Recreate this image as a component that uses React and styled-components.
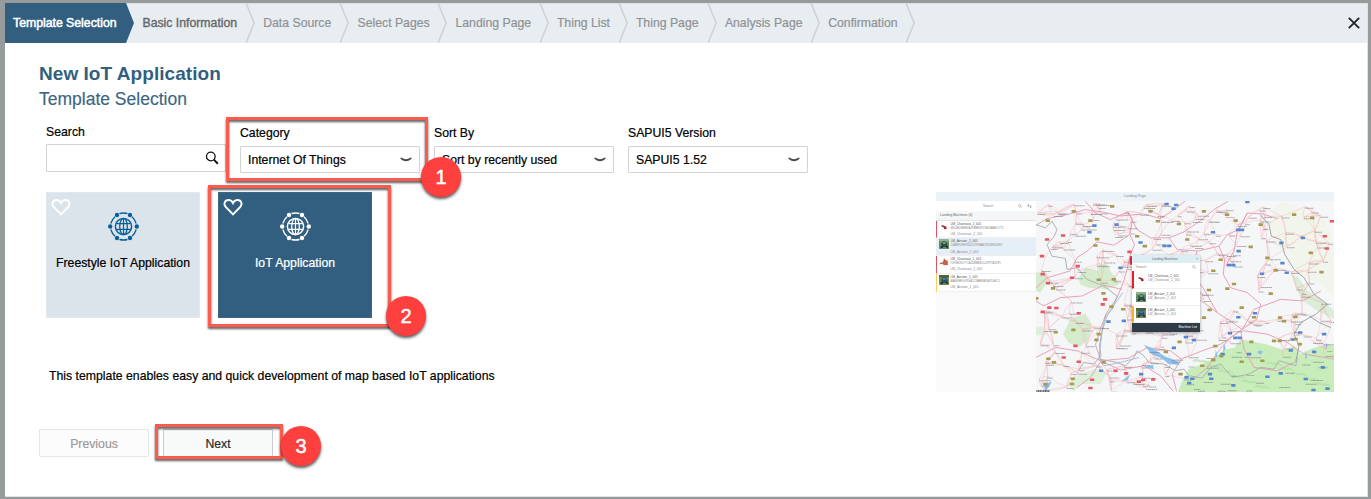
import React from "react";
import styled, { createGlobalStyle } from "styled-components";

const GlobalStyle = createGlobalStyle`
  * { box-sizing: border-box; }
  body { margin: 0; background: #979b9c; }
  body, button, input { font-family: "Liberation Sans", Arial, Helvetica, sans-serif; }
`;

const Frame = styled.div`
  height: 499px;
  padding: 3px 3px 2px 5px;
  background: #979b9c;
  font-size: 12.25px;
  color: #000;
`;

const Dialog = styled.div`
  position: relative;
  height: 494px;
  display: flex;
  flex-direction: column;
  background: #fff;
  border-right: 1px solid #dfe3e6;
  border-bottom: 1px solid #dfe3e6;
`;

const StepBar = styled.nav`
  height: 40px;
  flex: none;
  display: flex;
  background: #e8edf1;
  border-top: 1px solid #dde2e6;
`;

const Step = styled.div`
  position: relative;
  width: ${(p) => p.$width}px;
  height: 40px;
  margin-top: -1px;
  padding-left: ${(p) => ({ active: 8, next: 16.5, idle: 17.2 })[p.$state]}px;
  line-height: 41px;
  white-space: nowrap;
  background: ${(p) => (p.$state === "active" ? "#325f7f" : "transparent")};
  color: ${(p) => ({ active: "#fff", next: "#646769", idle: "#8f9294" })[p.$state]};
  -webkit-text-stroke: ${(p) => ({ active: "0.5px #fff", next: "0.35px #646769", idle: "0.2px #8f9294" })[p.$state]};
`;

const Chevron = styled.svg`
  position: absolute;
  left: 100%;
  top: 0;
  width: 9px;
  height: 40px;
`;

const CloseButton = styled.button`
  width: 14px;
  height: 40px;
  margin: -1px 6px 0 auto;
  padding: 0;
  border: 0;
  background: none;
  display: grid;
  place-items: center;
`;

const Content = styled.main`
  flex: 1;
  padding: 20px 33px 0 34px;
`;

const Title = styled.h1`
  margin: 0;
  font-size: 19px;
  line-height: 22px;
  letter-spacing: 0.05px;
  color: #325f7f;
`;

const Subtitle = styled.h2`
  margin: 0;
  padding-top: 2px;
  font-size: 17.5px;
  line-height: 24px;
  font-weight: 400;
  color: #3b6583;
  -webkit-text-stroke: 0.15px #3b6583;
`;

const Filters = styled.div`
  display: flex;
  gap: 14px;
  padding: 12px 0 0 7px;
`;

const Field = styled.label`
  width: 180px;
  display: flex;
  flex-direction: column;
  gap: ${(p) => (p.$search ? 3 : 4)}px;
  padding-top: ${(p) => (p.$search ? 0 : 1)}px;
  line-height: 18px;
  -webkit-text-stroke: 0.2px #000;
`;

const Control = styled.div`
  height: ${(p) => p.$height || 28}px;
  display: flex;
  align-items: center;
  justify-content: space-between;
  padding: 0 ${(p) => (p.$search ? 6 : 7)}px 0 7px;
  border: 1px solid #d3d3d3;
  border-radius: 1px;
  background: #fff;
`;

const SearchInput = styled.input`
  width: 140px;
  border: 0;
  padding: 0;
  outline: 0;
  background: none;
`;

const Body = styled.div`
  display: flex;
  justify-content: space-between;
  height: 200px;
  margin-top: 19px;
`;

const Tiles = styled.div`
  display: flex;
  gap: 18px;
  padding-left: 7px;
`;

const Tile = styled.div`
  position: relative;
  width: 154px;
  height: 126px;
  display: flex;
  flex-direction: column;
  align-items: center;
  padding-top: 19px;
  gap: 12.5px;
  background: ${(p) => (p.$selected ? "#325f7f" : "#dce4eb")};
  border: 1px solid ${(p) => (p.$selected ? "#3b6685" : "#e1e8ee")};
  color: ${(p) => (p.$selected ? "#fff" : "#000")};
  -webkit-text-stroke: 0.22px currentColor;
  line-height: 18px;
`;

const Heart = styled.svg`
  position: absolute;
  left: 4px;
  top: 5px;
`;

const LeftColumn = styled.div`
  display: flex;
  flex-direction: column;
`;

const Description = styled.p`
  margin: 0;
  padding: 48.5px 0 0 10px;
  line-height: 18px;
  letter-spacing: 0.006px;
  -webkit-text-stroke: 0.2px #000;
`;

const Actions = styled.div`
  display: flex;
  gap: 14px;
  margin-top: 37px;
`;

const ActionButton = styled.button`
  width: 110px;
  height: 28px;
  padding: 1px 0 0;
  font-size: 12.25px;
  border: 1px solid ${(p) => (p.disabled ? "#e6e6e6" : "#c9cbcc")};
  border-radius: 1px;
  background: ${(p) => (p.disabled ? "#fcfcfc" : "#f8fafa")};
  color: ${(p) => (p.disabled ? "#9a9a9a" : "#2b2b2b")};
  -webkit-text-stroke: 0.2px currentColor;
`;

/* Numbered callouts that lie over the dialog */
const CalloutBox = styled.div`
  position: absolute;
  left: ${(p) => p.$x}px;
  top: ${(p) => p.$y}px;
  width: ${(p) => p.$w}px;
  height: ${(p) => p.$h}px;
  border: 3px solid #fd5b4d;
  filter: drop-shadow(0 2px 1px rgba(0, 0, 0, 0.65));
  pointer-events: none;
`;

const CalloutNumber = styled.div`
  position: absolute;
  left: ${(p) => p.$x}px;
  top: ${(p) => p.$y}px;
  width: 40px;
  height: 40px;
  border-radius: 50%;
  background: #fd403e;
  color: #fff;
  font-size: 20px;
  line-height: 41px;
  text-align: center;
  -webkit-text-stroke: 0.5px #fff;
  box-shadow: 0 2px 3px rgba(0, 0, 0, 0.65);
`;

/* Template preview */
const Preview = styled.div`
  width: 398px;
  height: 200px;
  display: flex;
  flex-direction: column;
  overflow: hidden;
  background: #fafafa;
  color: #666;
  font-size: 3.3px;
  line-height: 4px;
`;

const PreviewHeader = styled.div`
  height: 9px;
  flex: none;
  background: #ebf2f8;
  text-align: center;
  line-height: 9px;
  font-size: 3.6px;
  color: #888;
`;

const PreviewBody = styled.div`
  flex: 1;
  display: flex;
  min-height: 0;
`;

const ListPanel = styled.div`
  width: 99.5px;
`;

const PreviewSearch = styled.div`
  display: flex;
  align-items: center;
  height: ${(p) => p.$h}px;
  padding: 0 4px 0 ${(p) => p.$indent}px;
  gap: 5px;
  background: #fff;
  color: #888;
  span { flex: 1; }
`;

const GroupHeader = styled.div`
  height: 9.5px;
  padding-left: 4px;
  line-height: 9px;
  font-size: 3.4px;
  background: #f5f6f7;
  border-bottom: 0.5px solid #e3e3e3;
`;

const Machine = styled.div`
  height: ${(p) => p.$h}px;
  display: flex;
  gap: ${(p) => (p.$popup ? 2 : 1.5)}px;
  padding: ${(p) => (p.$popup ? "2.6px 0 0 2px" : "1px 0 0 2px")};
  border-left: ${(p) => (p.$popup ? 2 : 1.6)}px solid ${(p) => p.$bar};
  background: ${(p) => (p.$selected ? "#e6eff8" : "#fff")};
  border-bottom: 0.5px solid #efefef;
`;

const MachineText = styled.div`
  display: flex;
  flex-direction: column;
  gap: ${(p) => (p.$popup ? 0.4 : 1.1)}px;
  white-space: nowrap;
  color: #8a8a8a;
  b { font-weight: 400; font-size: 3.2px; color: #555; }
`;

const MachineId = styled.span`
  font-size: 2.7px;
`;

const MapArea = styled.div`
  position: relative;
  flex: 1;
  overflow: hidden;
`;

const Popup = styled.div`
  position: absolute;
  left: 96.5px;
  top: 54px;
  width: 68px;
  height: 77px;
  background: #fff;
  box-shadow: 0 1px 3px rgba(0, 0, 0, 0.35);
`;

const PopupHeader = styled.div`
  height: 8px;
  line-height: 8px;
  padding: 0 2px 0 20px;
  display: flex;
  justify-content: space-between;
  background: #dcedf4;
  font-size: 3.2px;
`;

const PopupFooter = styled.div`
  height: 9.5px;
  padding-right: 3px;
  line-height: 9.5px;
  text-align: right;
  background: #2f3c48;
  color: #fff;
`;

const steps = [
  ["Template Selection", 121, "active"],
  ["Basic Information", 120, "next"],
  ["Data Source", 94.3, "idle"],
  ["Select Pages", 98, "idle"],
  ["Landing Page", 101.4, "idle"],
  ["Thing List", 79, "idle"],
  ["Thing Page", 89, "idle"],
  ["Analysis Page", 103.3, "idle"],
  ["Confirmation", 95.3, "idle"],
];

function SearchIcon({ size = 14, color = "#111" }) {
  return (
    <svg width={size} height={size} viewBox="0 0 14 14" fill="none" stroke={color}>
      <circle cx="5.8" cy="5.5" r="4.3" strokeWidth="1.3" />
      <path d="M8.9 8.6 12.8 12.7" strokeWidth="2" />
    </svg>
  );
}

function DownArrow() {
  return (
    <svg width="12" height="6" viewBox="0 0 12 6" fill="#4a4a4a">
      <path d="M.4 1.3C.4.5 1.1.4 1.7.8 4.5 2.7 7.5 2.7 10.3.8 10.9.4 11.6.5 11.6 1.3 11.6 1.7 11.4 2 11 2.3 8 4.9 4 4.9 1 2.3.6 2 .4 1.7.4 1.3Z" />
    </svg>
  );
}

function GlobeNetwork({ color }) {
  const nodes = [[2.2, 14.5], [9, 3], [22, 3], [28.8, 14.5], [22, 26], [9, 26]];
  return (
    <svg width="31" height="29" viewBox="0 0 31 29" fill="none" stroke={color} strokeWidth="1.3">
      <path d="M11.5 1.5Q15.5.5 19.5 1.5M11.5 27.5Q15.5 28.5 19.5 27.5M2.8 11.5Q4 7.5 7 4.8M28.2 11.5Q27 7.5 24 4.8M2.8 17.5Q4 21.5 7 24.2M28.2 17.5Q27 21.5 24 24.2" />
      <circle cx="15.5" cy="14.5" r="8.1" strokeWidth="1.5" />
      <ellipse cx="15.5" cy="14.5" rx="3.8" ry="8.1" />
      <path d="M15.5 6.5V22.5M8.4 11.7H22.6M8.4 17.3H22.6" strokeWidth="1.2" />
      {nodes.map(([x, y]) => (
        <circle key={`${x}-${y}`} cx={x} cy={y} r="2.2" fill={color} stroke="none" />
      ))}
    </svg>
  );
}

function TemplateTile({ label, selected }) {
  return (
    <Tile $selected={selected}>
      <Heart width="20" height="19" viewBox="0 0 20 19" fill="none" stroke="#fff" strokeWidth="1.9">
        <path d="M10 16.3 2.8 9C.2 6 1.8 2 5.4 2 7.6 2 9.2 3.2 10 5 10.8 3.2 12.4 2 14.6 2 18.2 2 19.8 6 17.2 9Z" />
      </Heart>
      <GlobeNetwork color={selected ? "#fff" : "#0b5f97"} />
      <span>{label}</span>
    </Tile>
  );
}

const ThumbSvg = styled.svg`
  flex: none;
  width: 10px;
  height: 10px;
`;

function Thumb({ kind, framed }) {
  const red = kind === "saw" || kind === "saw2";
  return (
    <ThumbSvg viewBox="0 0 30 30">
      <rect width="30" height="30" fill={red ? "#fff" : kind === "blue" ? "#6d8947" : "#638e65"} stroke={framed && red ? "#ccc" : "none"} />
      {kind === "saw" && <path d="M8 9 15 11 22 14 23 21 16 22 14 16 8 14Z" fill="#a52332" />}
      {kind === "saw2" && <path d="M2 19 12 15 15 4 20 9 26 11 27 24 14 25 11 20 2 22Z" fill="#c86050" />}
      {!red && (
        <g>
          <path d="M0 0H30V6L20 9 0 7Z" fill={kind === "blue" ? "#49653a" : "#8fb486"} />
          <path d="M7 14 12 7H20L25 14V24H7Z" fill={kind === "blue" ? "#294e78" : "#2d4d48"} />
          <path d="M12 9H20V15H12Z" fill={kind === "blue" ? "#3e81bd" : "#6e9ba1"} />
          <path d="M5 22H12V27H5ZM21 21H27V26H21Z" fill="#23332f" />
        </g>
      )}
    </ThumbSvg>
  );
}

const machines = [
  ["LM_Chainsaw_2_001", "8E14BD8B8B0A4FBBBDF07B42AABD1775", "#de5560", "saw"],
  ["LM_Aerator_2_001", "11AB3F498F6D412392BAAC9D38FD50F8", "#e6eff8", "green"],
  ["LM_Chainsaw_1_001", "74F6BD9D7TCA4DBBB3DC42F97A2DFC", "#de5560", "saw2"],
  ["LM_Aerator_1_001", "AAA4FBF049D4A11TABB3A36A7DA3C1", "#f5cc64", "blue"],
];

const popupMachines = [
  ["LM_Chainsaw_2_001", "#ec1c2c", "saw", 18],
  ["LM_Aerator_2_001", "#fff", "green", 16.5],
  ["LM_Aerator_1_001", "#f5ad3a", "blue", 17],
];

function randomFrom(seed) {
  let s = seed;
  return () => {
    s = (s * 16807) % 2147483647;
    return s / 2147483647;
  };
}

const rand = randomFrom(4127);
const towns = Array.from({ length: 300 }, () => [320 + rand() * 888, 42 + rand() * 568]);
const minorRoads = towns.flatMap(([x, y], i) =>
  towns
    .map(([a, b], j) => ({ a, b, j, d: Math.hypot(a - x, b - y) }))
    .filter((t) => t.j !== i)
    .sort((p, q) => p.d - q.d)
    .slice(0, 4)
    .filter((t) => (t.j > i || t.d > 40) && !(y > 490 && x > 760))
    .map((t) => {
      const cx = (x + t.a) / 2 + (rand() - 0.5) * 16;
      const cy = (y + t.b) / 2 + (rand() - 0.5) * 16;
      return `M${x.toFixed(0)} ${y.toFixed(0)}Q${cx.toFixed(0)} ${cy.toFixed(0)} ${t.a.toFixed(0)} ${t.b.toFixed(0)}`;
    })
);
const placeMarks = towns.map(([x, y]) => [x, y, 12 + rand() * 24]);

const mainRoads = [
  "M465 40 495 75 540 95 592 72 606 95 598 140 612 170 598 205 590 245 578 285 560 330 527 378 510 425 495 472 512 520",
  "M317 112 350 92 410 80 465 65 515 72 570 84 640 78 690 92 735 62 765 38",
  "M592 72 620 125 660 150 715 150 760 132 810 98 850 65 892 40",
  "M598 140 550 172 500 162 470 190 442 208 418 250 350 270 317 300",
  "M715 150 740 185 800 190 865 175 890 140 925 125 950 75 995 78 1040 92",
  "M865 175 882 215 878 260 900 300 950 315 990 350 978 395 935 425 900 450 868 485 830 540 790 575",
  "M590 245 655 250 705 286 760 320 810 338 860 375 905 405 940 430 1010 440 1070 465 1120 500 1211 515",
  "M575 305 520 292 455 325 390 330 340 355 317 340",
  "M317 510 375 480 440 490 512 520 595 512 650 480 720 490 752 515 810 492 870 470 930 430",
  "M512 520 480 570 440 600M512 520 570 548 640 535 690 565 728 612M752 515 725 560 738 612",
  "M950 75 920 130 910 190 885 235M800 190 780 250 820 305 860 375",
  "M935 425 970 365 1050 335 1115 340 1170 310M930 430 940 485 970 540 1040 550 1100 520",
];

const blueShields = [[737,51],[708,48],[729,62],[950,42],[558,110],[477,133],[492,113],[570,240],[630,164],[702,174],[716,174],[847,133],[922,126],[934,126],[895,232],[908,232],[924,190],[1052,165],[1116,150],[1055,226],[994,258],[1068,255],[973,377],[923,389],[898,437],[914,451],[927,451],[766,449],[534,402],[580,400],[1086,456],[1108,435],[1180,440],[955,500],[1150,493],[1080,489],[768,570],[785,574],[838,560],[842,574],[1010,568],[1050,558],[1125,575],[1148,608],[1190,604],[908,594],[1176,540],[776,587],[632,560],[730,481],[790,458],[876,500],[512,550]];
const oliveShields = [[352,98],[430,70],[480,98],[500,154],[495,173],[545,55],[660,70],[682,100],[745,108],[770,155],[820,70],[889,80],[915,98],[990,110],[1090,80],[1144,90],[960,177],[870,216],[1010,210],[1140,195],[1035,248],[1172,253],[835,307],[890,303],[910,289],[848,249],[1020,318],[505,276],[550,275],[368,302],[519,317],[318,332],[543,357],[578,365],[620,145],[643,175],[429,427],[376,434],[505,440],[498,457],[820,390],[837,367],[933,360],[970,389],[1048,390],[1060,401],[1094,388],[1094,455],[1107,470],[962,463],[1030,460],[1047,460],[854,476],[848,518],[872,506],[933,523],[995,520],[815,535],[750,560],[706,493],[747,463],[354,514],[371,525],[427,574],[425,590],[345,590],[520,525]];
const redShields = [[350,155],[398,143],[335,205],[442,235],[337,259],[425,270],[353,286],[337,373],[357,360],[378,361],[445,377],[524,335],[517,350],[435,475],[400,510],[445,523],[485,577],[480,602],[555,550],[587,558],[625,583],[638,578],[668,576],[1182,145],[1188,182],[1203,100],[597,192],[603,218]];

const MapSvg = styled.svg`
  display: block;
  width: 298.5px;
  height: 191px;
  filter: blur(0.3px);
`;

function MapDrawing() {
  return (
    <MapSvg viewBox="317 39 894 575" preserveAspectRatio="none">
      <rect x="317" y="39" width="894" height="575" fill="#f5f6f8" />
      <g fill="#c8e8bf">
        <path d="M317 255 345 250 355 275 330 315 317 310ZM444 270 465 240 510 250 552 262 565 290 530 305 475 300 450 290ZM420 395 465 378 484 410 475 455 445 480 415 465 398 440ZM500 235 530 228 545 260 515 265Z" opacity=".75" />
        <path d="M317 420 335 415 345 440 317 445ZM450 560 495 545 530 555 510 590 455 590 430 612 410 590Z" opacity=".5" />
        <path d="M1082 260 1105 272 1130 310 1165 330 1190 350 1211 370V395L1160 370 1110 335Z" opacity=".6" />
        <path d="M742 614 755 580 775 545 815 530 850 512 878 488 912 480 930 455 965 462 1005 470 1060 488 1090 475 1110 500 1145 482 1190 470 1211 475V614Z" fill="#c8edbb" />
        <path d="M1030 60 1060 42 1120 70 1180 92 1200 140 1211 180V330L1170 290 1105 260 1070 205 1035 170 1015 120Z" fill="#f0f5e4" opacity=".65" />
      </g>
      <g stroke="#addfa4" strokeWidth="2" fill="none" opacity=".8">
        {Array.from({ length: 42 }, (_, i) => {
          const x = 785 + (i * 73) % 400;
          const y = 520 + (i * 31) % 85;
          return <path key={i} d={`M${x} ${y}l12 -5 8 7 13 -4 9 6`} />;
        })}
      </g>
      <path d={minorRoads.join("")} fill="none" stroke="#f2b6b8" strokeWidth="1.5" opacity=".85" />
      <g fill="none" stroke="#ea9ab3" strokeWidth="2.8" strokeLinejoin="round">
        {mainRoads.map((d) => <path key={d} d={d} />)}
      </g>
      <g fill="none" stroke="#a9adb0" strokeWidth="2.8" strokeLinejoin="round">
        <path d="M317 110 345 120 365 100 380 125 370 148 350 170 365 205 405 212 410 245 440 240 470 275 520 295 560 325 545 365 525 385 515 430 507 475 512 505 490 530 460 525 445 550" />
        <path d="M507 515 560 525 585 535 610 510 620 490 640 505 655 525 700 530 735 550 760 545 775 565 815 572 840 540 870 530 905 570 955 560 990 540 1030 545 1045 520 1095 535 1100 510" />
        <path d="M990 82 1015 110 1022 145 1050 155 1062 200 1090 245 1120 270 1150 320 1190 350 1155 380 1110 405 1090 440 1105 475 1095 520M1135 385 1165 405 1200 420" stroke="#9a9fa0" />
      </g>
      <path d="M577 315 552 350 530 385 515 430 510 475 505 515 520 535 570 525 625 510" fill="none" stroke="#97b7da" strokeWidth="2.6" />
      <g fill="#8abff0">
        <path d="M640 472 665 482 705 508 742 522 748 533 715 530 690 510 665 502ZM640 538 667 533 670 546 655 542Z" />
        <path d="M855 485 861 508 854 512ZM880 465 885 485 877 493ZM985 488 997 492 990 502 980 495ZM1123 487 1129 510 1124 516ZM1187 465 1191 476 1184 485ZM340 590 365 583 345 614ZM572 583 600 560 592 577Z" />
      </g>
      <g stroke="#77787c" strokeWidth="3" opacity=".62">
        {placeMarks.map(([x, y, w], i) => (
          <path key={i} d={`M${x.toFixed(1)} ${(y + 5).toFixed(1)}h${w.toFixed(1)}`} strokeDasharray="4 1 6 1" />
        ))}
      </g>
      {[[blueShields, "#5987cf"], [oliveShields, "#a79b50"], [redShields, "#e75765"]].map(([items, fill]) => (
        <g key={fill} fill={fill}>
          {items.map(([x, y], i) => <rect key={i} x={x - 6.5} y={y - 4} width="13" height="8" rx="1" />)}
        </g>
      ))}
      <path d="M598 205h9v26h-9z" fill="#e0314b" />
      <path d="M318 611h40" stroke="#444" strokeWidth="4" strokeDasharray="4 1" />
    </MapSvg>
  );
}

function TemplatePreview() {
  return (
    <Preview>
      <PreviewHeader>Landing Page</PreviewHeader>
      <PreviewBody>
        <ListPanel>
          <PreviewSearch $h={10} $indent={47}>
            <span>Search</span>
            <SearchIcon size={4} color="#777" />
            <svg width="5" height="4" viewBox="0 0 15 12" fill="none" stroke="#777" strokeWidth="1.5">
              <path d="M4 10V2M1 5 4 2 7 5M11 3V11M8 8 11 11 14 8" />
            </svg>
          </PreviewSearch>
          <GroupHeader>Landing Machines (4)</GroupHeader>
          {machines.map(([name, id, bar, kind], i) => (
            <Machine key={name} $h={17.9} $bar={bar} $selected={i === 1}>
              <Thumb kind={kind} />
              <MachineText>
                <b>{name}</b>
                <MachineId>{id}</MachineId>
                <span>{name}</span>
              </MachineText>
            </Machine>
          ))}
        </ListPanel>
        <MapArea>
          <MapDrawing />
          <Popup>
            <PopupHeader><span>Landing Machines</span><span>×</span></PopupHeader>
            <PreviewSearch $h={8} $indent={4}><span>Search</span><SearchIcon size={4} color="#777" /></PreviewSearch>
            {popupMachines.map(([name, bar, kind, h]) => (
              <Machine key={name} $h={h} $bar={bar} $popup>
                <Thumb kind={kind} framed />
                <MachineText $popup><b>{name}</b><span>{name}</span></MachineText>
              </Machine>
            ))}
            <PopupFooter>Machine List</PopupFooter>
          </Popup>
        </MapArea>
      </PreviewBody>
    </Preview>
  );
}

function SelectField({ label, value }) {
  return (
    <Field>
      {label}
      <Control $height={27}>{value}<DownArrow /></Control>
    </Field>
  );
}

export default function App() {
  return (
    <Frame>
      <GlobalStyle />
      <Dialog>
        <StepBar>
          {steps.map(([label, width, state]) => (
            <Step key={label} $width={width} $state={state}>
              {label}
              <Chevron viewBox="0 0 9 40">
                {state === "active"
                  ? <path d="M0 0 8 20 0 40Z" fill="#325f7f" />
                  : <path d="M0 0 8.2 20 0 40" fill="none" stroke="#cdd1d4" strokeWidth="1.5" />}
              </Chevron>
            </Step>
          ))}
          <CloseButton aria-label="Close">
            <svg width="12" height="12" viewBox="0 0 12 12" stroke="#222" strokeWidth="1.8">
              <path d="M.8.8 11.2 11.2M11.2.8.8 11.2" />
            </svg>
          </CloseButton>
        </StepBar>
        <Content>
          <Title>New IoT Application</Title>
          <Subtitle>Template Selection</Subtitle>
          <Filters>
            <Field $search>
              Search
              <Control $search><SearchInput /><SearchIcon /></Control>
            </Field>
            <SelectField label="Category" value="Internet Of Things" />
            <SelectField label="Sort By" value="Sort by recently used" />
            <SelectField label="SAPUI5 Version" value="SAPUI5 1.52" />
          </Filters>
          <Body>
            <LeftColumn>
              <Tiles>
                <TemplateTile label="Freestyle IoT Application" />
                <TemplateTile label="IoT Application" selected />
              </Tiles>
              <Description>This template enables easy and quick development of map based IoT applications</Description>
            </LeftColumn>
            <TemplatePreview />
          </Body>
          <Actions>
            <ActionButton disabled>Previous</ActionButton>
            <ActionButton>Next</ActionButton>
          </Actions>
        </Content>
        <CalloutBox $x={221} $y={114} $w={202} $h={64} />
        <CalloutBox $x={203} $y={182} $w={183} $h={142} />
        <CalloutBox $x={150} $y={421} $w={128} $h={35} />
        <CalloutNumber $x={416} $y={154}>1</CalloutNumber>
        <CalloutNumber $x={381} $y={293}>2</CalloutNumber>
        <CalloutNumber $x={276} $y={423}>3</CalloutNumber>
      </Dialog>
    </Frame>
  );
}
